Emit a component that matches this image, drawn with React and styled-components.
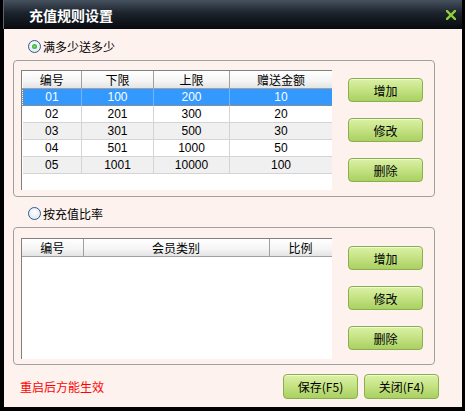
import React from "react"
import styled, { createGlobalStyle } from "styled-components"

const GlobalStyle = createGlobalStyle`
  html, body {
    margin: 0;
    padding: 0;
    background: #000;
  }
  body {
    font-family: "Liberation Sans", "Noto Sans CJK SC", sans-serif;
    font-size: 12px;
  }
`

const rules = [
  { id: "01", low: 100, high: 200, gift: 10 },
  { id: "02", low: 201, high: 300, gift: 20 },
  { id: "03", low: 301, high: 500, gift: 30 },
  { id: "04", low: 501, high: 1000, gift: 50 },
  { id: "05", low: 1001, high: 10000, gift: 100 },
]

const Window = styled.div`
  width: 465px;
  height: 411px;
  box-sizing: border-box;
  background: #000;
  padding: 0 3px 4px 4px;
  display: flex;
  flex-direction: column;
`

const TitleBar = styled.div`
  height: 29px;
  flex-shrink: 0;
  margin-left: -1px;
  display: flex;
  align-items: center;
  justify-content: space-between;
  padding: 0 6px 0 25px;
  background: linear-gradient(#46515f 0%, #1c232c 45%, #070a0e 100%);
  border-left: 1px solid #5a6470;
  color: #fff;
  font-family: "Noto Sans CJK SC", sans-serif;
  font-weight: bold;
  font-size: 14px;
`

const CloseIcon = styled.svg`
  width: 10px;
  height: 10px;
  margin-top: 0;
`

const Content = styled.div`
  flex: 1;
  background: #fdf2ee;
  padding: 8px 27px 8px 9px;
  display: flex;
  flex-direction: column;
`

const RadioRow = styled.label`
  height: 18px;
  display: flex;
  align-items: center;
  gap: 2px;
  padding-left: 15px;
  margin-top: ${p => p.$top || 0}px;
  color: #000;
  font-family: "Noto Sans CJK SC", sans-serif;
  font-size: 12px;
`

const RadioDot = styled.span`
  width: 11px;
  height: 11px;
  border-radius: 50%;
  border: 1px solid #2f5a8f;
  background: radial-gradient(circle at 50% 40%, #ffffff 0%, #e4ebf3 70%, #c8d4e2 100%);
  display: flex;
  align-items: center;
  justify-content: center;
  &::after {
    content: "";
    width: 5px;
    height: 5px;
    border-radius: 50%;
    background: ${p => (p.$checked ? "radial-gradient(circle, #6fe05a, #1f9a2a)" : "transparent")};
  }
`

const Group = styled.div`
  margin-top: 5px;
  height: ${p => p.$height}px;
  box-sizing: border-box;
  border: 1px solid #a0a0a0;
  border-radius: 4px;
  display: flex;
  align-items: flex-start;
  padding: ${p => p.$padTop}px 0 0 7px;
`

const Frame = styled.div`
  width: 311px;
  height: ${p => p.$height}px;
  box-sizing: border-box;
  background: #fff;
  border-top: 1px solid #808080;
  border-left: 1px solid #808080;
  overflow: hidden;
`

const Grid = styled.table`
  border-collapse: collapse;
  table-layout: fixed;
  width: 310px;
`

const Head = styled.th`
  height: 17px;
  padding: 0;
  font-weight: normal;
  font-family: "Noto Sans CJK SC", sans-serif;
  font-size: 12px;
  color: #000;
  background: linear-gradient(#ffffff, #f4f4f4 60%, #e4e4e4);
  border-bottom: 1px solid #a0a0a0;
  border-right: 1px solid #a0a0a0;
  &:last-child {
    border-right: 1px solid #a0a0a0;
  }
`

const Row = styled.tr`
  background: ${p => (p.$selected ? "#3399ff" : p.$alt ? "#f0f0f0" : "#fff")};
  color: ${p => (p.$selected ? "#fff" : "#000")};
`

const Cell = styled.td`
  height: 16px;
  padding: 0;
  text-align: center;
  font-size: 12px;
  border-bottom: 1px solid #d4d4d4;
  border-right: 1px solid ${p => (p.$selected ? "#6fb6ff" : "#d4d4d4")};
  ${p =>
    p.$selected &&
    `
    border-top: 1px dotted #d9802b;
    border-bottom: 1px dotted #d9802b;
    &:first-child { border-left: 1px dotted #d9802b; }
    &:last-child { border-right: 1px dotted #d9802b; }
  `}
`

const Buttons = styled.div`
  margin-left: 16px;
  padding-top: ${p => p.$top}px;
  display: flex;
  flex-direction: column;
  gap: 16px;
`

const GreenButton = styled.button`
  width: ${p => p.$width || 75}px;
  height: ${p => p.$height || 24}px;
  padding: 0;
  border: 1px solid #8dae4c;
  border-radius: 4px;
  background: linear-gradient(#dcf0a8 0%, #c6e486 45%, #a9d062 100%);
  box-shadow: inset 0 1px 0 #eef8d2;
  color: #000;
  font-family: "Noto Sans CJK SC", sans-serif;
  font-size: 12px;
  cursor: pointer;
`

const Footer = styled.div`
  margin-top: 9px;
  margin-right: -4px;
  display: flex;
  align-items: center;
  padding-left: 7px;
  gap: 6px;
`

const Notice = styled.span`
  flex: 1;
  color: #ff0000;
  font-family: "Noto Sans CJK SC", sans-serif;
  font-size: 12px;
`

function Radio({ checked, label, top }) {
  return (
    <RadioRow $top={top}>
      <RadioDot $checked={checked} />
      {label}
    </RadioRow>
  )
}

function ActionButtons({ top }) {
  return (
    <Buttons $top={top}>
      <GreenButton>增加</GreenButton>
      <GreenButton>修改</GreenButton>
      <GreenButton>删除</GreenButton>
    </Buttons>
  )
}

export default function App() {
  return (
    <>
      <GlobalStyle />
      <Window>
        <TitleBar>
          充值规则设置
          <CloseIcon viewBox="0 0 10 10">
            <path d="M1 1 L9 9 M9 1 L1 9" stroke="#8fd03a" strokeWidth="2.4" strokeLinecap="square" />
          </CloseIcon>
        </TitleBar>
        <Content>
          <Radio checked label="满多少送多少" />
          <Group $height={137} $padTop={9}>
            <Frame $height={120}>
              <Grid>
                <colgroup>
                  <col style={{ width: 59 }} />
                  <col style={{ width: 72 }} />
                  <col style={{ width: 76 }} />
                  <col style={{ width: 103 }} />
                </colgroup>
                <thead>
                  <tr>
                    <Head>编号</Head>
                    <Head>下限</Head>
                    <Head>上限</Head>
                    <Head>赠送金额</Head>
                  </tr>
                </thead>
                <tbody>
                  {rules.map((r, i) => (
                    <Row key={r.id} $selected={i === 0} $alt={i % 2 === 0}>
                      <Cell $selected={i === 0}>{r.id}</Cell>
                      <Cell $selected={i === 0}>{r.low}</Cell>
                      <Cell $selected={i === 0}>{r.high}</Cell>
                      <Cell $selected={i === 0}>{r.gift}</Cell>
                    </Row>
                  ))}
                </tbody>
              </Grid>
            </Frame>
            <ActionButtons top={8} />
          </Group>
          <Radio label="按充值比率" top={7} />
          <Group $height={138} $padTop={10}>
            <Frame $height={121}>
              <Grid>
                <colgroup>
                  <col style={{ width: 61 }} />
                  <col style={{ width: 186 }} />
                  <col style={{ width: 63 }} />
                </colgroup>
                <thead>
                  <tr>
                    <Head>编号</Head>
                    <Head>会员类别</Head>
                    <Head>比例</Head>
                  </tr>
                </thead>
              </Grid>
            </Frame>
            <ActionButtons top={8} />
          </Group>
          <Footer>
            <Notice>重启后方能生效</Notice>
            <GreenButton $height={25}>保存(F5)</GreenButton>
            <GreenButton $height={25}>关闭(F4)</GreenButton>
          </Footer>
        </Content>
      </Window>
    </>
  )
}
